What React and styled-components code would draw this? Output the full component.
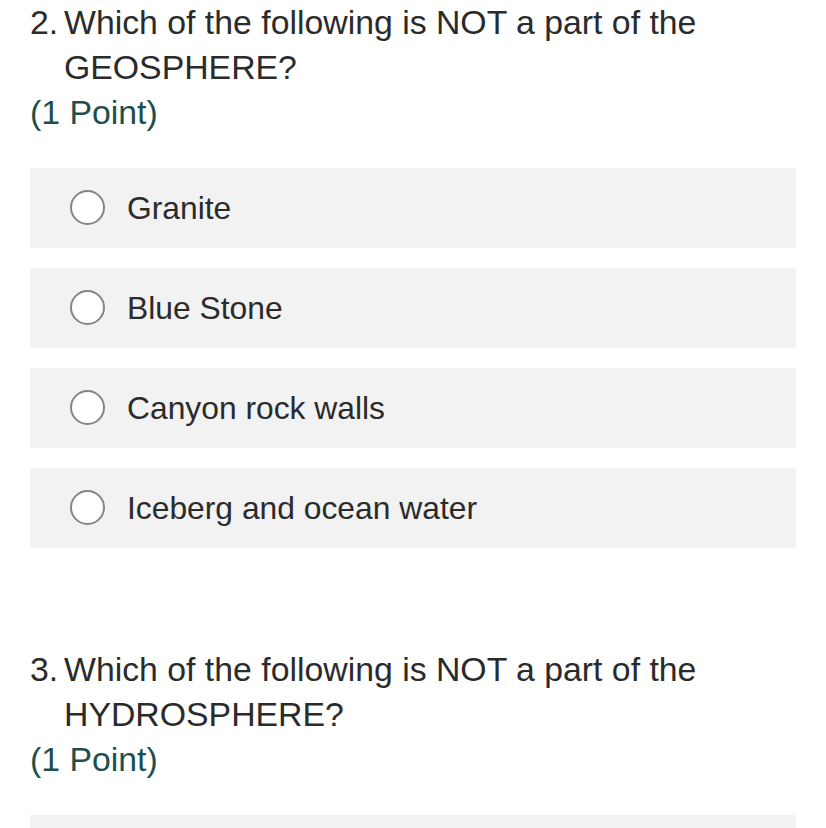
import React from "react";
import styled, { createGlobalStyle } from "styled-components";

const Global = createGlobalStyle`
  html, body { margin: 0; padding: 0; background: #ffffff; }
  body { font-family: "Liberation Sans", Arial, Helvetica, sans-serif; color: #2e2e2e; }
`;

const Page = styled.div`
  padding: 0 30px;
  display: flex;
  flex-direction: column;
`;

const Question = styled.section`
  display: flex;
  flex-direction: column;
  margin-bottom: 99px;
`;

const Title = styled.div`
  display: flex;
  font-size: 33.8px;
  line-height: 45px;
  color: #2b2b2b;
`;

const Num = styled.span`
  flex: 0 0 34px;
`;

const TitleText = styled.span`
  flex: 1;
`;

const Points = styled.div`
  font-size: 33.8px;
  line-height: 44px;
  color: #1d4f4c;
`;

const Options = styled.div`
  display: flex;
  flex-direction: column;
  gap: 20px;
  margin-top: 34px;
`;

const Option = styled.label`
  display: flex;
  align-items: center;
  height: 80px;
  background: #f2f2f2;
  padding-left: 40px;
  box-sizing: border-box;
  gap: 22px;
`;

const Radio = styled.span`
  width: 35px;
  height: 35px;
  box-sizing: border-box;
  border: 2px solid #858585;
  border-radius: 50%;
  background: #ffffff;
  flex: 0 0 auto;
  margin-top: -2px;
`;

const OptionText = styled.span`
  font-size: 31.8px;
  color: #2b2b2b;
`;

const questions = [
  {
    n: "2.",
    text: "Which of the following is NOT a part of the GEOSPHERE?",
    options: ["Granite", "Blue Stone", "Canyon rock walls", "Iceberg and ocean water"],
  },
  {
    n: "3.",
    text: "Which of the following is NOT a part of the HYDROSPHERE?",
    options: [""],
  },
];

export default function App() {
  return (
    <>
      <Global />
      <Page>
        {questions.map((q) => (
          <Question key={q.n}>
            <Title>
              <Num>{q.n}</Num>
              <TitleText>{q.text}</TitleText>
            </Title>
            <Points>(1 Point)</Points>
            <Options>
              {q.options.map((o, i) => (
                <Option key={i}>
                  <Radio />
                  {o && <OptionText>{o}</OptionText>}
                </Option>
              ))}
            </Options>
          </Question>
        ))}
      </Page>
    </>
  );
}
